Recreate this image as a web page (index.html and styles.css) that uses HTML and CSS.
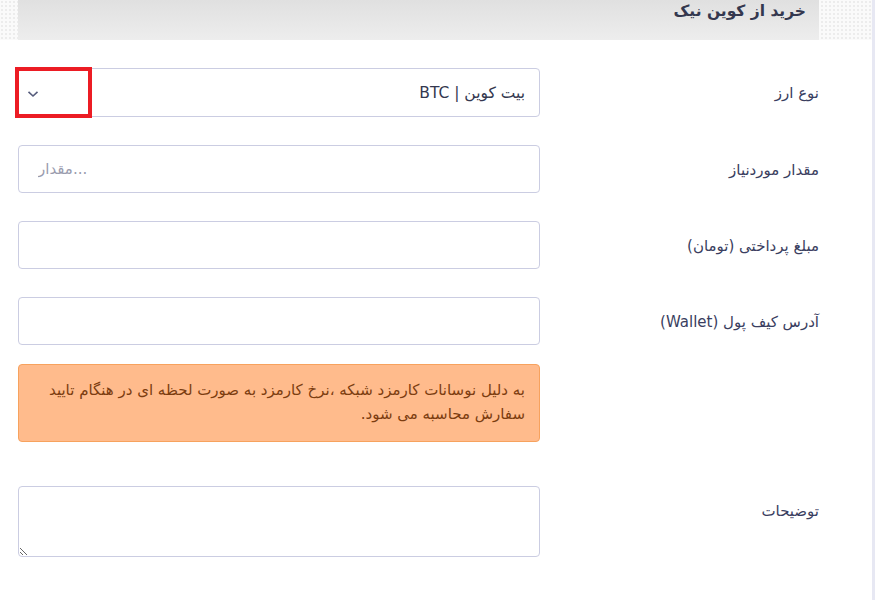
FILE: index.html
```html
<!DOCTYPE html>
<html lang="fa" dir="rtl">
<head>
<meta charset="utf-8">
<title>خرید از کوین نیک</title>
<link rel="stylesheet" href="styles.css">
</head>
<body>
<div class="page">
  <div class="top-band">
    <div class="panel-head"><h2 class="panel-title">خرید از کوین نیک</h2></div>
  </div>
  <form class="form">
    <div class="row">
      <label class="label">نوع ارز</label>
      <div class="field">
        <div class="select">
          <span class="select-text">بیت کوین | BTC</span>
          <svg class="chev" width="12" height="8" viewBox="0 0 12 8"><path d="M1.5 1.8 L6 6 L10.5 1.8" fill="none" stroke="#565c7c" stroke-width="1.6"/></svg>
          <span class="mark"></span>
        </div>
      </div>
    </div>
    <div class="row">
      <label class="label">مقدار موردنیاز</label>
      <div class="field"><input class="input input-left" dir="ltr" type="text" placeholder="مقدار..."></div>
    </div>
    <div class="row">
      <label class="label">مبلغ پرداختی (تومان)</label>
      <div class="field"><input class="input" type="text"></div>
    </div>
    <div class="row row-alert">
      <label class="label">آدرس کیف پول (Wallet)</label>
      <div class="field">
        <input class="input" type="text">
        <div class="alert">به دلیل نوسانات کارمزد شبکه ،نرخ کارمزد به صورت لحظه ای در هنگام تایید سفارش محاسبه می شود.</div>
      </div>
    </div>
    <div class="row">
      <label class="label">توضیحات</label>
      <div class="field"><textarea class="textarea"></textarea></div>
    </div>
  </form>
</div>
</body>
</html>
```
FILE: styles.css
```css
* { box-sizing: border-box; }
html, body { margin: 0; padding: 0; }
body {
  background: #ffffff;
  font-family: "DejaVu Sans", "Noto Sans", sans-serif;
  color: #3b3f5c;
  direction: rtl;
}
.page {
  width: 875px;
  height: 600px;
  border-right: 3px solid #e7e8f3;
  overflow: hidden;
}
.top-band {
  height: 40px;
  padding: 0 53px 0 18px;
  background-color: #fafafa;
  background-image: radial-gradient(circle, #ececec 0.8px, transparent 1px);
  background-size: 4px 4px;
}
.panel-head {
  height: 40px;
  background: linear-gradient(#e0e0e0, #ededed);
  padding: 0 13px 0 0;
}
.panel-title {
  margin: 0;
  font-size: 15.5px;
  font-weight: bold;
  line-height: 23px;
  color: #34384f;
}
.form {
  padding: 28px 53px 0 18px;
}
.row {
  display: grid;
  grid-template-columns: 279px 522px;
  align-items: start;
  margin-bottom: 28px;
}
.row-alert { margin-bottom: 44px; }
.label {
  display: block;
  height: 48px;
  font-size: 15px;
  line-height: 51px;
  color: #3a3e60;
  white-space: nowrap;
}
.field { position: relative; }
.select {
  position: relative;
  height: 49px;
  border: 1px solid #cbcde2;
  border-radius: 4px;
  display: flex;
  align-items: center;
  justify-content: space-between;
  padding: 0 14px 0 8px;
}
.select-text {
  font-size: 15.5px;
  color: #34384f;
}
.chev { margin-top: 2px; }
.mark {
  position: absolute;
  left: -4px;
  top: -2px;
  width: 77px;
  height: 51px;
  border: 4px solid #ec1c24;
}
.input {
  display: block;
  width: 100%;
  height: 48px;
  border: 1px solid #cbcde2;
  border-radius: 4px;
  font-family: inherit;
  font-size: 15px;
  padding: 0 15px;
  direction: rtl;
  outline: none;
}
.input-left { direction: ltr; text-align: left; padding-left: 19px; }
.input::placeholder { color: #9a9cae; }
.alert {
  margin-top: 19px;
  height: 78px;
  background: #ffbb8c;
  border: 1px solid #f7a25e;
  border-radius: 4px;
  padding: 13px 14px 0 14px;
  font-size: 15px;
  line-height: 24px;
  color: #7c3d10;
}
.textarea {
  display: block;
  width: 100%;
  height: 71px;
  border: 1px solid #cbcde2;
  border-radius: 4px;
  font-family: inherit;
  direction: rtl;
  outline: none;
}
```
